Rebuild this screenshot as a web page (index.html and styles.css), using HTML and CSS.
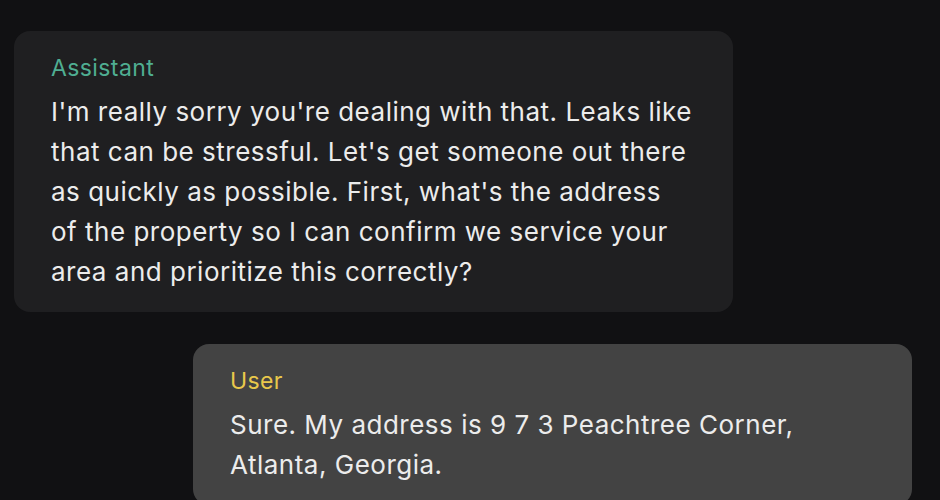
FILE: index.html
```html
<!DOCTYPE html>
<html lang="en">
<head>
  <meta charset="UTF-8" />
  <title>Conversation</title>
  <link rel="stylesheet" href="styles.css">
</head>
<body>
  <div class="chat">
    <div class="msg assistant">
      <div class="role">Assistant</div>
      <p>I'm really sorry you're dealing with that. Leaks like that can be stressful. Let's get someone out there as quickly as possible. First, what's the address of the property so I can confirm we service your area and prioritize this correctly?</p>
    </div>
    <div class="msg user">
      <div class="role">User</div>
      <p>Sure. My address is 9 7 3 Peachtree Corner, Atlanta, Georgia.</p>
    </div>
  </div>
</body>
</html>
```

FILE: styles.css
```css
html, body {
  margin: 0;
  height: 100%;
  overflow: hidden;
}
body {
  background: #111113;
  font-family: 'Inter', 'Noto Sans', sans-serif;
  color: #ececec;
}
.chat {
  display: flex;
  flex-direction: column;
  gap: 32px;
  padding: 31px 28px 0 14px;
}
.msg {
  width: 719px;
  box-sizing: border-box;
  padding: 22px 40px 20px 37px;
  border-radius: 16px;
}
.assistant {
  background: #1f1f21;
  align-self: flex-start;
}
.user {
  background: #434343;
  align-self: flex-end;
}
.role {
  font-size: 23px;
  line-height: 30px;
  letter-spacing: 0.4px;
  margin-bottom: 9px;
}
.assistant .role {
  color: #4fae92;
}
.user .role {
  color: #e9c84b;
}
.msg p {
  margin: 0;
  font-size: 26px;
  line-height: 40px;
  letter-spacing: 0.5px;
}
```
